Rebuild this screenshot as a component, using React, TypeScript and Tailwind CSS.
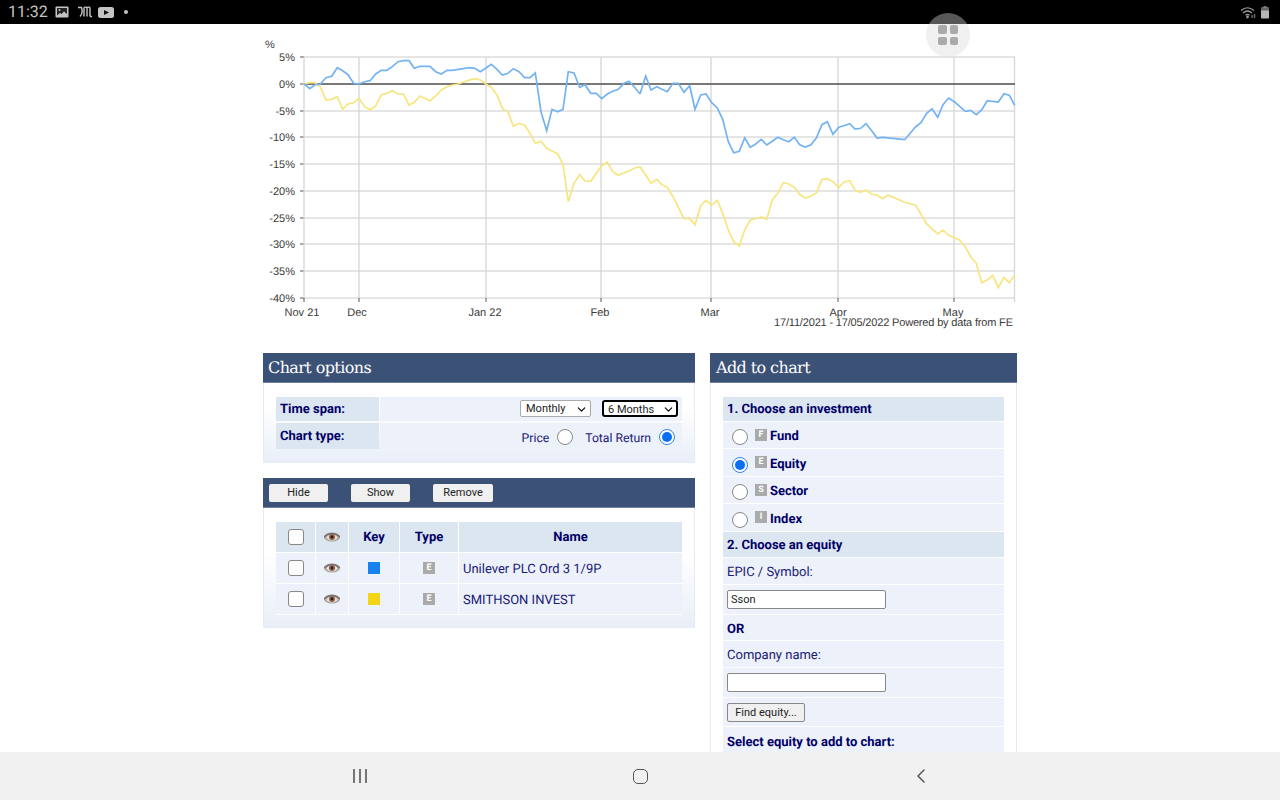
import React from 'react';
import { ChevronDown, ChevronLeft } from 'lucide-react';

// points read off the chart, first half and second half have their own origin
const left = (pts: number[][]) => pts.map(([x, y]) => `${(x / 3 + 255).toFixed(1)},${(y / 3 + 30).toFixed(1)}`).join(' ');
const right = (pts: number[][]) => pts.map(([x, y]) => `${(x / 3 + 640).toFixed(1)},${(y / 3 + 30).toFixed(1)}`).join(' ');

const blueA = [[148,162],[164,176],[180,164],[196,162],[213,143],[230,139],[247,113],[263,122],[279,134],[296,160],[312,162],[329,155],[345,152],[362,132],[379,121],[396,121],[412,110],[429,95],[445,92],[462,92],[478,115],[495,109],[525,109],[542,125],[559,132],[576,121],[593,121],[610,118],[643,113],[660,115],[676,125],[693,114],[709,103],[726,118],[742,135],[759,130],[775,116],[792,125],[809,143],[825,143],[841,129],[858,245],[875,302],[891,238],[908,245],[924,238],[940,125],[957,129],[974,172],[990,164],[1007,190],[1024,190],[1040,206],[1057,192],[1073,184],[1090,178],[1107,160],[1122,154],[1140,173],[1155,192]];
const blueB = [[0,192],[17,138],[33,180],[50,170],[66,178],[82,185],[99,160],[115,160],[132,187],[149,167],[165,238],[182,195],[198,192],[215,218],[232,234],[248,268],[265,335],[281,368],[298,364],[314,324],[331,352],[347,342],[364,328],[380,345],[397,334],[413,322],[430,329],[446,335],[463,322],[479,344],[496,351],[513,344],[529,324],[546,284],[562,275],[579,313],[596,292],[612,287],[629,281],[645,297],[662,295],[678,281],[695,302],[711,324],[728,322],[794,329],[827,290],[843,278],[860,250],[876,236],[893,262],[909,224],[926,204],[943,215],[976,244],[992,241],[1009,254],[1025,240],[1042,212],[1075,216],[1092,191],[1108,196],[1124,226]];
const yellowA = [[148,162],[164,158],[180,158],[196,170],[213,210],[230,208],[247,200],[263,238],[279,222],[296,218],[312,205],[329,230],[345,240],[362,228],[379,195],[396,190],[412,182],[429,192],[445,192],[462,225],[478,217],[495,198],[525,213],[542,198],[559,180],[576,170],[593,165],[610,162],[643,150],[660,146],[676,150],[693,162],[709,172],[726,195],[742,235],[759,246],[775,289],[792,280],[809,286],[825,310],[841,340],[858,334],[875,355],[891,363],[908,372],[924,403],[940,515],[957,460],[974,434],[990,453],[1007,454],[1024,430],[1040,407],[1057,397],[1073,425],[1090,436],[1107,428],[1122,423],[1140,414],[1155,410]];
const yellowB = [[0,410],[17,435],[33,460],[50,448],[66,464],[82,472],[99,500],[115,532],[132,566],[149,566],[165,584],[182,527],[198,511],[215,525],[232,511],[248,550],[265,600],[281,635],[298,648],[314,600],[331,570],[347,566],[364,561],[380,568],[397,510],[413,490],[430,458],[446,462],[463,472],[479,493],[496,504],[513,498],[529,489],[546,448],[562,446],[579,455],[596,473],[612,456],[629,452],[645,481],[662,487],[678,480],[695,493],[711,495],[728,506],[744,495],[794,517],[827,526],[860,582],[893,612],[909,600],[926,616],[943,623],[959,631],[976,650],[992,680],[1009,700],[1025,758],[1042,750],[1058,736],[1075,773],[1092,742],[1108,758],[1124,736]];

const yTicks: [number, string][] = [[57,'5%'],[84,'0%'],[111,'-5%'],[137,'-10%'],[164,'-15%'],[191,'-20%'],[218,'-25%'],[244,'-30%'],[271,'-35%'],[298,'-40%']];
const xTicks: [number, number, string][] = [[304,302,'Nov 21'],[359,357,'Dec'],[486,485,'Jan 22'],[601,600,'Feb'],[711,710,'Mar'],[838,838,'Apr'],[954,953,'May']];

const Chart = () => (
  <svg viewBox="255 30 770 300" width={770} height={300} className="block -ml-2 mt-[6px]" fontFamily="'Liberation Sans', sans-serif" fontSize={11} fill="#3a3a3a">
    <text x={265} y={48}>%</text>
    {yTicks.map(([y, label]) => (
      <g key={label}>
        <line x1={304} x2={1015} y1={y} y2={y} stroke="#dcdcdc" strokeWidth={1.3} />
        <line x1={300} x2={304} y1={y} y2={y} stroke="#555" />
        <text x={295} y={y + 4} textAnchor="end">{label}</text>
      </g>
    ))}
    {xTicks.map(([x, cx, label]) => (
      <g key={label}>
        <line x1={x} x2={x} y1={57} y2={298} stroke="#d6d6d6" strokeWidth={1.3} />
        <line x1={x} x2={x} y1={298} y2={302} stroke="#555" />
        <text x={cx} y={316} textAnchor="middle">{label}</text>
      </g>
    ))}
    <line x1={1014.5} x2={1014.5} y1={57} y2={302} stroke="#d6d6d6" strokeWidth={1.3} />
    <line x1={304} x2={1015} y1={84} y2={84} stroke="#555" strokeWidth={1.3} />
    <polyline points={left(yellowA)} fill="none" stroke="#f7e57f" strokeWidth={1.7} />
    <polyline points={right(yellowB)} fill="none" stroke="#f7e57f" strokeWidth={1.7} />
    <polyline points={left(blueA)} fill="none" stroke="#74b3f2" strokeWidth={1.7} />
    <polyline points={right(blueB)} fill="none" stroke="#74b3f2" strokeWidth={1.7} />
    <text x={1013} y={326} textAnchor="end" textLength={239}>17/11/2021 - 17/05/2022 Powered by data from FE</text>
  </svg>
);

const Radio = ({ checked }: { checked?: boolean }) => (
  <span className={`w-4 h-4 rounded-full bg-white border-[1.5px] flex items-center justify-center shrink-0 ${checked ? 'border-[#2f86f0]' : 'border-[#888888]'}`}>
    {checked && <span className="w-[10px] h-[10px] rounded-full bg-[#0a6ff0]" />}
  </span>
);

const Check = () => <span className="block w-4 h-4 rounded-[3px] bg-white border-[1.5px] border-[#888888]" />;

const Badge = ({ letter }: { letter: string }) => (
  <span className="w-3 h-3 bg-[#aaaaaa] text-white text-[9px] leading-3 font-bold text-center block shrink-0">{letter}</span>
);

const Eye = () => (
  <svg width="16" height="10" viewBox="0 0 16 10">
    <ellipse cx="8" cy="5" rx="8" ry="4.5" fill="#a9a3a0" />
    <ellipse cx="8" cy="5.5" rx="5.5" ry="3" fill="#e6dfdb" />
    <circle cx="8" cy="5" r="3" fill="#94604a" />
    <circle cx="8" cy="5" r="1.4" fill="#2e1d17" />
    <path d="M0 5Q8-2 16 5" fill="none" stroke="#77706c" strokeWidth="1.4" />
  </svg>
);

const Select = ({ label, width, focused }: { label: string; width: string; focused?: boolean }) => (
  <div className={`relative ${width}`}>
    <select
      defaultValue={label}
      className={`appearance-none block w-full h-[17px] bg-white text-[11px] leading-[15px] text-[#222222] rounded-[2px] ${focused ? 'pl-[4px] border-2 border-black rounded-[3px]' : 'pl-[5px] border border-[#aaaaaa]'}`}
    >
      <option>{label}</option>
    </select>
    <ChevronDown size={13} strokeWidth={2} className="absolute right-[3px] top-[3px] text-black pointer-events-none" />
  </div>
);

const Panel = ({ header, children, className }: { header: React.ReactNode; children: React.ReactNode; className?: string }) => (
  <section className={`border-x border-b border-[#e6ebf4] bg-gradient-to-b from-white from-50% to-[#e9eef7] ${className ?? ''}`}>
    <header className="h-[30px] -mx-px bg-[#3c5176] border-b border-[#6f80a0] flex items-center">{header}</header>
    {children}
  </section>
);

const Title = ({ children, className }: { children: string; className?: string }) => (
  <h2 className={`text-[16px] text-white font-['DejaVu_Serif',serif] tracking-[-0.6px] ${className ?? 'pl-[5px]'}`}>{children}</h2>
);

const SmallButton = ({ children, className }: { children: string; className: string }) => (
  <button className={`h-[18px] mt-px pt-px bg-[#f0f0f0] rounded-[2px] text-[11px] text-[#222222] text-center ${className}`}>{children}</button>
);

const ChartOptions = () => (
  <Panel header={<Title>Chart options</Title>}>
    <div className="px-3 pt-[14px] pb-[13px] text-[#1a1a78]">
      <div className="flex flex-col gap-[2px]">
        <div className="flex h-[24px] gap-px">
          <div className="w-[103px] bg-[#dce6f1] pl-1 text-[13px] font-bold text-[#000066] leading-[25px]">Time span:</div>
          <div className="flex-1 bg-[#edf1f9] flex items-center justify-end pr-[4px] gap-[11px] pb-[1px]">
            <Select label="Monthly" width="w-[71px]" />
            <Select label="6 Months" width="w-[76px]" focused />
          </div>
        </div>
        <div className="flex h-[26px] gap-px">
          <div className="w-[103px] bg-[#dce6f1] pl-1 text-[13px] font-bold text-[#000066] leading-[27px]">Chart type:</div>
          <div className="flex-1 bg-[#edf1f9] flex items-center justify-end pr-[7px] text-[12.2px]">
            <span className="mr-[8px] pt-[4px]">Price</span>
            <span className="mt-px"><Radio /></span>
            <span className="ml-[12px] mr-[8px] pt-[4px]">Total Return</span>
            <span className="mt-px"><Radio checked /></span>
          </div>
        </div>
      </div>
    </div>
  </Panel>
);

const rows = [
  { name: 'Unilever PLC Ord 3 1/9P', color: 'bg-[#1a82f0]' },
  { name: 'SMITHSON INVEST', color: 'bg-[#f3d515]' },
];

const Holdings = () => (
  <Panel
    className="mt-[15px]"
    header={
      <div className="flex pl-[6px]">
        <SmallButton className="w-[59px]">Hide</SmallButton>
        <SmallButton className="w-[59px] ml-[23px]">Show</SmallButton>
        <SmallButton className="w-[60px] ml-[23px]">Remove</SmallButton>
      </div>
    }
  >
    <div className="px-3 pt-[14px] pb-[12px]">
      <table className="w-full border-separate border-spacing-0 text-[#1a1a78] table-fixed">
        <colgroup>
          <col className="w-[40px]" />
          <col className="w-[33px]" />
          <col className="w-[51px]" />
          <col className="w-[59px]" />
          <col />
        </colgroup>
        <thead>
          <tr className="h-[31px] bg-[#dce6f1] text-[13px] font-bold text-[#000066]">
            <th className="border-r border-b border-white"><span className="flex justify-center"><Check /></span></th>
            <th className="border-r border-b border-white"><span className="flex justify-center"><Eye /></span></th>
            <th className="border-r border-b border-white pt-[2px]">Key</th>
            <th className="border-r border-b border-white pt-[2px]">Type</th>
            <th className="border-b border-white pt-[2px]">Name</th>
          </tr>
        </thead>
        <tbody>
          {rows.map((row) => (
            <tr key={row.name} className="h-[31px] bg-[#edf1f9] text-[13px]">
              <td className="border-r border-b border-white"><span className="flex justify-center"><Check /></span></td>
              <td className="border-r border-b border-white"><span className="flex justify-center"><Eye /></span></td>
              <td className="border-r border-b border-white"><span className={`block w-3 h-3 mx-auto ${row.color}`} /></td>
              <td className="border-r border-b border-white"><span className="flex justify-center"><Badge letter="E" /></span></td>
              <td className="border-b border-white pl-1 pt-[3px] font-normal">{row.name}</td>
            </tr>
          ))}
        </tbody>
      </table>
    </div>
  </Panel>
);

const Head = ({ children, h }: { children: string; h: string }) => (
  <div className={`${h} bg-[#dce6f1] px-1 pt-[2px] flex items-center text-[13px] font-bold text-[#000066]`}>{children}</div>
);

const Row = ({ children, h }: { children: React.ReactNode; h: string }) => (
  <div className={`${h} bg-[#edf1f9] px-1 flex items-center text-[13px] text-[#1a1a78]`}>{children}</div>
);

const Label = ({ children, bold }: { children: string; bold?: boolean }) => (
  <span className={`pt-[4px] ${bold ? 'font-bold text-[#000066]' : ''}`}>{children}</span>
);

const Option = ({ letter, label, checked, h }: { letter: string; label: string; checked?: boolean; h: string }) => (
  <Row h={h}>
    <span className="ml-[5px] mr-[7px] mt-[4px]"><Radio checked={checked} /></span>
    <span className="mb-[1px] mr-[3px]"><Badge letter={letter} /></span>
    <span className="font-bold text-[#000066] mt-[4px]">{label}</span>
  </Row>
);

const TextBox = ({ value }: { value?: string }) => (
  <input
    readOnly
    value={value ?? ''}
    className="w-[159px] h-[19px] bg-white border border-[#888888] rounded-[2px] px-[3px] text-[11px] text-[#222222]"
  />
);

const AddToChart = () => (
  <Panel header={<Title className="pl-[6px]">Add to chart</Title>} className="h-[900px]">
    <div className="px-3 pt-[14px] flex flex-col gap-px">
      <Head h="h-[24px]">1. Choose an investment</Head>
      <Option h="h-[26px]" letter="F" label="Fund" />
      <Option h="h-[27px]" letter="E" label="Equity" checked />
      <Option h="h-[26px]" letter="S" label="Sector" />
      <Option h="h-[27px]" letter="I" label="Index" />
      <Head h="h-[25px]">2. Choose an equity</Head>
      <Row h="h-[26px]"><Label>EPIC / Symbol:</Label></Row>
      <Row h="h-[29px]"><TextBox value="Sson" /></Row>
      <Row h="h-[25px]"><Label bold>OR</Label></Row>
      <Row h="h-[26px]"><Label>Company name:</Label></Row>
      <Row h="h-[29px]"><TextBox /></Row>
      <Row h="h-[28px]">
        <button className="w-[78px] h-[19px] mt-px pt-px bg-[#f0f0f0] border border-[#888888] rounded-[2px] text-[11px] text-[#222222]">Find equity...</button>
      </Row>
      <Row h="h-[28px]"><Label bold>Select equity to add to chart:</Label></Row>
    </div>
  </Panel>
);

const StatusBar = () => (
  <div className="h-6 shrink-0 bg-black flex items-center justify-between pl-[8px] pr-[11px] text-[#c4c4c4]">
    <div className="flex items-center">
      <span className="text-[16px] font-['Roboto',sans-serif] mr-[7px]">11:32</span>
      <svg width="14" height="12" viewBox="0 0 14 12" className="mr-[9px]">
        <rect x="0.5" y="0.5" width="13" height="11" rx="1" fill="#c4c4c4" />
        <path d="M2 2h10v6L9 5.5 6.5 8 5 7 2 9.5z" fill="#222" />
        <circle cx="4.5" cy="4" r="1" fill="#c4c4c4" />
      </svg>
      <svg width="14" height="12" viewBox="0 0 14 12" className="mr-[6px]" fill="none" stroke="#c4c4c4" strokeWidth="1.4">
        <path d="M0 1.5h4M3.5 1.5c1 3 .5 7-1.5 9M6 1.5v9M9 1.5v9M12 1.5v9M6 1.5c1-.5 2-.5 3 0M9 1.5c1-.5 2-.5 3 0M12 10.5h2" />
      </svg>
      <svg width="16" height="11" viewBox="0 0 16 11" className="mr-[10px]">
        <rect width="16" height="11" rx="2.5" fill="#c4c4c4" />
        <path d="M6 3l5 2.5L6 8z" fill="#111" />
      </svg>
      <span className="w-[4px] h-[4px] rounded-full bg-[#c4c4c4]" />
    </div>
    <div className="flex items-center gap-[3px]">
      <svg width="18" height="13" viewBox="0 0 18 13" fill="none" stroke="#9a9a9a" strokeWidth="1.2">
        <path d="M1 4.5Q7.5-1 14 4.5M3 7Q7.5 3 12 7M5.5 9.2Q7.5 7.5 9.5 9.2" />
        <circle cx="7.5" cy="11" r="0.8" fill="#9a9a9a" />
        <path d="M12 12V9M14.5 12V8" stroke="#6a6a6a" strokeWidth="1.5" />
      </svg>
      <svg width="8" height="13" viewBox="0 0 8 13">
        <rect x="2.5" width="3" height="2" fill="#777" />
        <rect y="1.5" width="8" height="11" rx="1" fill="#b5b5b5" />
        <rect y="1.5" width="8" height="3" fill="#666" />
      </svg>
    </div>
  </div>
);

const NavBar = () => (
  <nav className="h-12 shrink-0 bg-[#f1f1f1] relative z-10 flex items-center text-[#555555]">
    <svg width="16" height="14" viewBox="0 0 16 14" className="ml-[352px]" stroke="#555" strokeWidth="1.6">
      <path d="M2 0v14M8 0v14M14 0v14" />
    </svg>
    <span className="absolute left-[633px] top-[17px] w-[15px] h-[15px] rounded-[5px] border-[1.6px] border-[#555555]" />
    <ChevronLeft size={24} strokeWidth={1.5} className="absolute left-[909px] top-[12px]" />
  </nav>
);

export default function App() {
  return (
    <div className="relative w-[1280px] h-[800px] overflow-hidden flex flex-col bg-white font-['Roboto',sans-serif] [text-rendering:geometricPrecision]">
      <StatusBar />
      <main className="flex-1 overflow-hidden pl-[263px]">
        <div className="w-[754px]">
          <Chart />
          <div className="mt-[23px] flex items-start justify-between">
            <div className="w-[432px]">
              <ChartOptions />
              <Holdings />
            </div>
            <div className="w-[307px]">
              <AddToChart />
            </div>
          </div>
        </div>
      </main>
      <NavBar />
      {/* floating shortcut button sits over the page */}
      <div className="absolute left-[926px] top-[13px] w-[44px] h-[44px] rounded-full bg-[#d9d9d9]/40 grid grid-cols-2 gap-[3px] p-[12px]">
        <span className="rounded-[2px] bg-[#aaaaaa]" />
        <span className="rounded-[2px] bg-[#aaaaaa]" />
        <span className="rounded-[2px] bg-[#aaaaaa]" />
        <span className="rounded-[2px] bg-[#aaaaaa]" />
      </div>
    </div>
  );
}
